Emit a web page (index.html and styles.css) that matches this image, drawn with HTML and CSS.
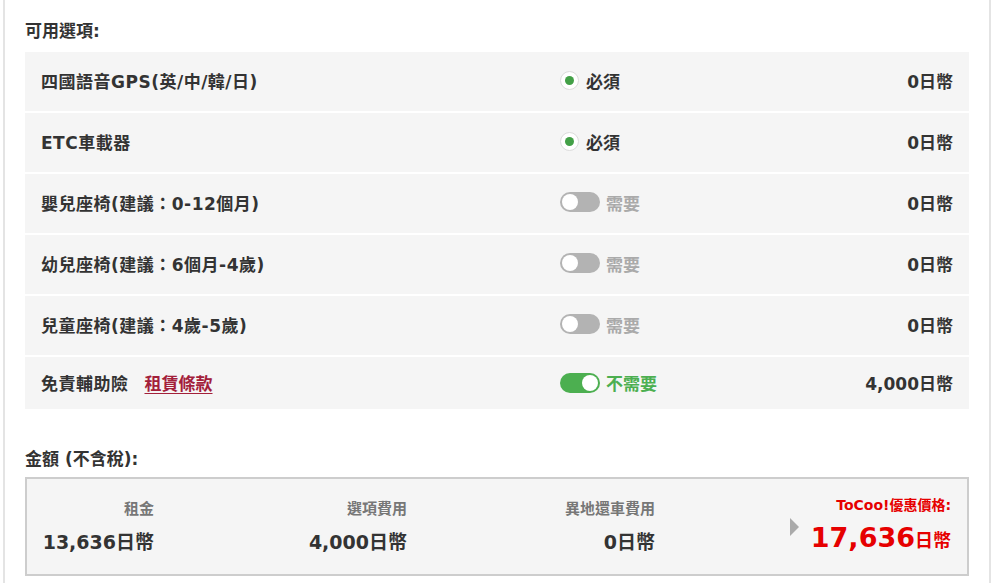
FILE: index.html
```html
<!DOCTYPE html>
<html lang="zh-Hant">
<head>
<meta charset="utf-8">
<link rel="stylesheet" href="styles.css">
</head>
<body>
<div class="panel">
  <h3 class="heading">可用選項:</h3>
  <div class="options">
    <div class="opt">
      <div class="opt-name">四國語音GPS(英/中/韓/日)</div>
      <div class="opt-state"><span class="radio"></span><span class="st st-req">必須</span></div>
      <div class="opt-price">0日幣</div>
    </div>
    <div class="opt">
      <div class="opt-name">ETC車載器</div>
      <div class="opt-state"><span class="radio"></span><span class="st st-req">必須</span></div>
      <div class="opt-price">0日幣</div>
    </div>
    <div class="opt">
      <div class="opt-name">嬰兒座椅(建議：0-12個月)</div>
      <div class="opt-state"><span class="toggle"></span><span class="st st-off">需要</span></div>
      <div class="opt-price">0日幣</div>
    </div>
    <div class="opt">
      <div class="opt-name">幼兒座椅(建議：6個月-4歲)</div>
      <div class="opt-state"><span class="toggle"></span><span class="st st-off">需要</span></div>
      <div class="opt-price">0日幣</div>
    </div>
    <div class="opt">
      <div class="opt-name">兒童座椅(建議：4歲-5歲)</div>
      <div class="opt-state"><span class="toggle"></span><span class="st st-off">需要</span></div>
      <div class="opt-price">0日幣</div>
    </div>
    <div class="opt opt-short">
      <div class="opt-name">免責輔助險<a class="terms" href="#">租賃條款</a></div>
      <div class="opt-state"><span class="toggle toggle-on"></span><span class="st st-on">不需要</span></div>
      <div class="opt-price">4,000日幣</div>
    </div>
  </div>

  <h3 class="heading heading-sum">金額 (不含稅):</h3>
  <div class="summary">
    <div class="sum-col">
      <div class="sum-label">租金</div>
      <div class="sum-value">13,636日幣</div>
    </div>
    <div class="sum-col">
      <div class="sum-label">選項費用</div>
      <div class="sum-value">4,000日幣</div>
    </div>
    <div class="sum-col">
      <div class="sum-label">異地還車費用</div>
      <div class="sum-value">0日幣</div>
    </div>
    <div class="sum-col sum-total">
      <span class="arrow"></span>
      <div class="total-box">
        <div class="total-label">ToCoo!優惠價格:</div>
        <div class="total-value">17,636<span class="total-unit">日幣</span></div>
      </div>
    </div>
  </div>
</div>
</body>
</html>
```

FILE: styles.css
```css
html, body {
  margin: 0;
  padding: 0;
  background: #fff;
}
body {
  font-family: "DejaVu Sans", "Noto Sans CJK TC", sans-serif;
  color: #333;
  overflow: hidden;
}
.panel {
  margin-left: 3px;
  width: 988px;
  min-height: 600px;
  border-left: 2px solid #e4e4e4;
  border-right: 2px solid #e4e4e4;
  padding: 21px 20px 0 20px;
  box-sizing: border-box;
}
.heading {
  margin: 0 0 10px 0;
  font-size: 17px;
  font-weight: bold;
  line-height: 21px;
  color: #333;
}
.heading-sum {
  margin-top: 40px;
  margin-bottom: 7px;
}
.options {
  display: flex;
  flex-direction: column;
  gap: 2px;
}
.opt {
  display: grid;
  grid-template-columns: 519px 1fr auto;
  align-items: center;
  height: 59px;
  padding: 0 16px 3px 16px;
  box-sizing: border-box;
  background: #f5f5f5;
  font-size: 17px;
  font-weight: bold;
}
.opt-short {
  height: 52px;
  padding-bottom: 1px;
}
.opt-name {
  display: flex;
  align-items: center;
  gap: 16px;
  letter-spacing: 0.5px;
}
.terms {
  color: #a3203a;
  text-decoration: underline;
  text-underline-offset: 3px;
  letter-spacing: 0;
}
.opt-state {
  display: flex;
  align-items: center;
  gap: 6px;
}
.radio {
  width: 19px;
  height: 19px;
  border-radius: 50%;
  background: #fff;
  border: 1px solid #dcdcdc;
  box-sizing: border-box;
  display: flex;
  align-items: center;
  justify-content: center;
  margin-right: 1px;
}
.radio::after {
  content: "";
  width: 9px;
  height: 9px;
  border-radius: 50%;
  background: #43a047;
}
.toggle {
  position: relative;
  width: 40px;
  height: 20px;
  border-radius: 10px;
  background: #b3b3b3;
}
.toggle::after {
  content: "";
  position: absolute;
  top: 2px;
  left: 2px;
  width: 16px;
  height: 16px;
  border-radius: 50%;
  background: #fff;
}
.toggle-on {
  background: #4caf50;
}
.toggle-on::after {
  left: 22px;
}
.st-req { color: #333; }
.st-off { color: #aaa; }
.st-on { color: #4caf50; }
.opt-price {
  text-align: right;
}
.summary {
  display: grid;
  grid-template-columns: 143px 253px 248px 1fr;
  height: 99px;
  border: 2px solid #cdcdcd;
  background: #f5f5f5;
  box-sizing: border-box;
}
.sum-col {
  display: flex;
  flex-direction: column;
  align-items: flex-end;
  padding: 21px 16px 0 0;
}
.sum-label {
  font-size: 15px;
  color: #777;
  font-weight: bold;
  line-height: 18px;
}
.sum-value {
  margin-top: 12px;
  font-size: 19px;
  font-weight: bold;
  line-height: 24px;
  color: #333;
}
.sum-total {
  flex-direction: row;
  align-items: flex-start;
  justify-content: space-between;
  padding-top: 17px;
  padding-left: 119px;
}
.arrow {
  margin-top: 22px;
  width: 0;
  height: 0;
  border-top: 9px solid transparent;
  border-bottom: 9px solid transparent;
  border-left: 9px solid #aaa;
}
.total-box {
  display: flex;
  flex-direction: column;
  align-items: flex-end;
}
.total-label {
  font-size: 14px;
  font-weight: bold;
  color: #e60000;
  line-height: 18px;
}
.total-value {
  margin-top: 6px;
  font-size: 27px;
  font-weight: bold;
  color: #e60000;
  line-height: 36px;
}
.total-unit {
  font-size: 18px;
}
```
